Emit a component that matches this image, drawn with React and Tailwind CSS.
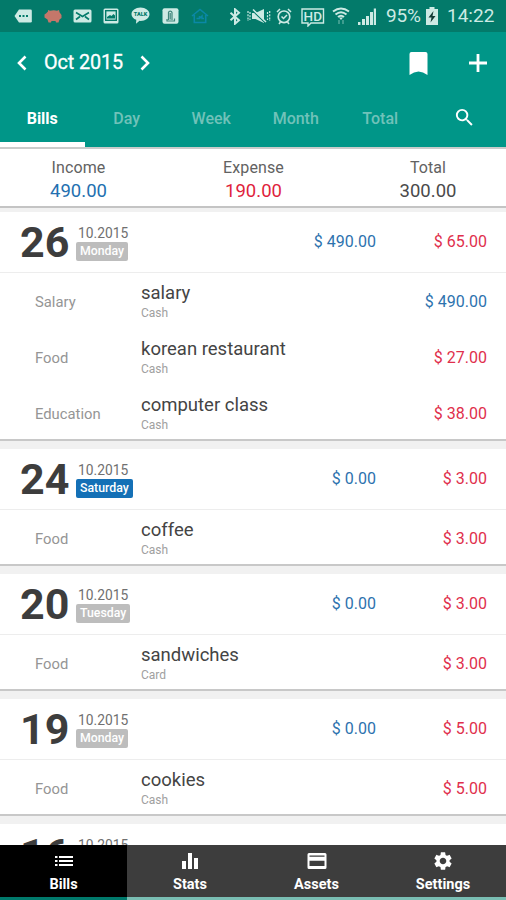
import clsx from "clsx";
import { MdSearch, MdEqualizer, MdSettings } from "react-icons/md";

const tabs = ["Bills", "Day", "Week", "Month", "Total"];

const days = [
  {
    day: "26",
    weekday: "Monday",
    income: "490.00",
    expense: "65.00",
    items: [
      { category: "Salary", title: "salary", account: "Cash", amount: "490.00", income: true },
      { category: "Food", title: "korean restaurant", account: "Cash", amount: "27.00" },
      { category: "Education", title: "computer class", account: "Cash", amount: "38.00" },
    ],
  },
  {
    day: "24",
    weekday: "Saturday",
    income: "0.00",
    expense: "3.00",
    items: [{ category: "Food", title: "coffee", account: "Cash", amount: "3.00" }],
  },
  {
    day: "20",
    weekday: "Tuesday",
    income: "0.00",
    expense: "3.00",
    items: [{ category: "Food", title: "sandwiches", account: "Card", amount: "3.00" }],
  },
  {
    day: "19",
    weekday: "Monday",
    income: "0.00",
    expense: "5.00",
    items: [{ category: "Food", title: "cookies", account: "Cash", amount: "5.00" }],
  },
  { day: "16", items: [] },
];

/*   STATUS BAR   */
function StatusBar() {
  return (
    <div className="flex h-[32px] shrink-0 items-center bg-[#037a6a] pl-[14px] text-[#cdeae4]">
      {/* tag */}
      <svg width="18" height="14" viewBox="0 0 18 14">
        <path d="M5 0.5h11.5a1.3 1.3 0 0 1 1.3 1.3v10.4a1.3 1.3 0 0 1-1.3 1.3H5L0.5 7z" fill="currentColor" />
        <path d="M5 6h2v2H5zM8.500 6h2v2h-2zM12 6h2v2h-2z" fill="#037a6a" />
      </svg>
      {/* piggy bank */}
      <svg className="ml-[12px]" width="18" height="14" viewBox="0 0 18 14">
        <path
          d="M0.500 5.500L2 4.500l2-2V1l2 .8q4-1.300 7 0L15 1l.5 2.300L17.500 6v3l-2 1.500-1 3h-2.500L11.500 12h-4L7 13.500H4.500L3.500 10.500 0.500 8.500z"
          fill="#c4776a"
        />
      </svg>
      {/* mail */}
      <svg className="ml-[11px]" width="19" height="14" viewBox="0 0 19 14">
        <rect x="0.500" y="0.500" width="18" height="13" rx="1.500" fill="currentColor" />
        <path d="M3 3.500l6.500 4 6.500-4M3 10.500l4-3M16 10.500l-4-3" fill="none" stroke="#037a6a" strokeWidth="1.600" />
      </svg>
      {/* picture */}
      <svg className="ml-[11px]" width="16" height="16" viewBox="0 0 16 16">
        <rect x="0.500" y="0.500" width="15" height="15" rx="1.500" fill="currentColor" />
        <rect x="2.700" y="2.700" width="10.600" height="9.600" fill="none" stroke="#037a6a" strokeWidth="1.400" />
        <path d="M4 10.500V9l3-2 1.500 1 2-2L12 7.500v3z" fill="#037a6a" />
      </svg>
      {/* talk bubble */}
      <svg className="ml-[12px]" width="19" height="18" viewBox="0 0 19 18">
        <path
          d="M9.500 0.500c5 0 9 3 9 6.700s-4 6.700-9 6.700l-1-.1-3.500 3 .3-4C2.500 11.800.5 9.700.5 7.200c0-3.700 4-6.700 9-6.700z"
          fill="currentColor"
        />
        <text x="9.500" y="9.400" textAnchor="middle" fontSize="5.500" fontWeight="900" fill="#037a6a">
          TALK
        </text>
      </svg>
      {/* app badge */}
      <svg className="ml-[12px]" width="17" height="16" viewBox="0 0 17 16">
        <rect x="0.500" y="0.300" width="16" height="15.400" rx="2" fill="currentColor" />
        <path d="M6.500 12V4.500a1.800 1.800 0 0 1 3.500 0V12M8.200 5v6.500M5 11v2h7.500v-2.500" fill="none" stroke="#3f857b" strokeWidth="1.200" />
      </svg>
      {/* home */}
      <svg className="ml-[12px]" width="18" height="16" viewBox="0 0 18 16">
        <path d="M1 8l8-6.500L17 8M3.300 7v7.500h11.400V7" fill="none" stroke="#0b88a6" strokeWidth="1.600" />
        <path d="M5.500 10.500h3V8M8.500 10.500L11 8v2.500h2" stroke="#0b88a6" strokeWidth="1.500" fill="none" />
      </svg>
      {/* bluetooth */}
      <svg className="ml-[20px]" width="12" height="17" viewBox="0 0 12 17">
        <path d="M1.500 4.700l8.500 7.500-4 3.500V1.300l4 3.500-8.500 7.500" fill="none" stroke="currentColor" strokeWidth="2" />
      </svg>
      {/* vibrate / muted */}
      <svg className="ml-[6px]" width="24" height="16" viewBox="0 0 24 16">
        <path d="M5 5h3.500L17 1v14l-8.500-4H5z" fill="currentColor" />
        <path d="M5 2l13 12.500" stroke="#037a6a" strokeWidth="1.400" />
        <path d="M6 1.500l13 12.500" stroke="currentColor" strokeWidth="1.500" />
        <path d="M1 3v10M3 4v8M20.500 4v8M22.700 3v10" stroke="currentColor" strokeWidth="1.200" strokeDasharray="2 1.200" />
      </svg>
      {/* alarm */}
      <svg className="ml-[5px]" width="16" height="17" viewBox="0 0 16 17">
        <circle cx="8" cy="8.800" r="5.800" fill="none" stroke="currentColor" strokeWidth="1.700" />
        <path d="M1 4l3-3M15 4l-3-3M3 16l1.500-2M13 16l-1.500-2M5.500 8.500l2 2 3.500-3.500" fill="none" stroke="currentColor" strokeWidth="1.500" />
      </svg>
      {/* HD voice */}
      <svg className="ml-[9px] mt-[2px]" width="24" height="19" viewBox="0 0 24 19">
        <path d="M1 1h21.500v14H10l-3 3v-3H1z" fill="none" stroke="currentColor" strokeWidth="1.400" />
        <text x="11.800" y="12.800" textAnchor="middle" fontSize="13.500" fontWeight="500" fill="currentColor">
          HD
        </text>
      </svg>
      {/* wifi */}
      <svg className="ml-[7px]" width="18" height="18" viewBox="0 0 18 18">
        <path d="M1 4.500q8-6 16 0M3.500 7.500q5.500-4.500 11 0M6 10q3-2.500 6 0" fill="none" stroke="currentColor" strokeWidth="2" />
        <path d="M7 10.500h4L9 13z" fill="currentColor" />
        <path d="M7 13v4M11 13v4" stroke="#5fb0a3" strokeWidth="1.300" />
      </svg>
      {/* signal */}
      <svg className="ml-[8px]" width="18" height="17" viewBox="0 0 18 17">
        <path d="M0 14h2.500v3H0zM4 11h3v6H4zM8 8h3v9H8zM12 4h3v13H12zM15.800 0.500H18v16.500h-2.200z" fill="currentColor" />
      </svg>
      <span className="ml-[10px] mt-[1px] w-[36px] text-[19px] tracking-[-0.2px]">95%</span>
      {/* battery */}
      <svg className="ml-[4px]" width="12" height="18" viewBox="0 0 12 18">
        <path d="M3.500 0h5v2H12v16H0V2h3.500z" fill="currentColor" />
        <path d="M7.500 4L2.500 10.500h3L4.500 15.500l5-6.500h-3z" fill="#123b35" />
      </svg>
      <span className="ml-[9px] mt-[1px] text-[19px]">14:22</span>
    </div>
  );
}

/*   HEADER   */
function Header() {
  return (
    <header className="h-[117px] shrink-0 border-b-2 border-[#c9cccb] bg-[#009688] text-white">
      <div className="flex h-[62px] items-center pl-[17px] pr-[19px]">
        <svg width="10" height="16" viewBox="0 0 10 16">
          <path d="M8.500 1.500L2 8l6.500 6.500" fill="none" stroke="currentColor" strokeWidth="2.600" />
        </svg>
        <span className="ml-[17px] w-[79px] whitespace-nowrap text-[19.800px] tracking-[-0.1px] [-webkit-text-stroke:0.3px]">
          Oct 2015
        </span>
        <svg className="ml-[17px]" width="10" height="16" viewBox="0 0 10 16">
          <path d="M1.500 1.500L8 8l-6.500 6.500" fill="none" stroke="currentColor" strokeWidth="2.600" />
        </svg>
        <svg className="ml-auto" width="19" height="23" viewBox="0 0 19 23">
          <path d="M2.500 0h14A2 2 0 0 1 18.500 2v21q-9-7-18 0V2A2 2 0 0 1 2.500 0z" fill="currentColor" />
        </svg>
        <svg className="ml-[41px]" width="18" height="18" viewBox="0 0 18 18">
          <path d="M0 9h18M9 0v18" stroke="currentColor" strokeWidth="2.800" />
        </svg>
      </div>
      <div className="flex h-[53px]">
        {tabs.map((tab, i) => (
          <div
            key={tab}
            className={clsx(
              "flex h-full w-[84.500px] justify-center border-b-[5px] pt-[12px] text-[16px] leading-[25px]",
              i === 0 ? "border-white font-bold" : "border-transparent font-medium text-[#70c2b9]"
            )}
          >
            {tab}
          </div>
        ))}
        <div className="flex flex-1 justify-center pt-[12px]">
          <MdSearch className="size-[23px]" />
        </div>
      </div>
    </header>
  );
}

function Total({ label, value, className }) {
  return (
    <div className="flex flex-col items-center pt-[7px]">
      <span className="text-[16px] leading-[23px] tracking-[0.1px] text-[#626262]">{label}</span>
      <span className={clsx("text-[18.500px] leading-[24px]", className)}>{value}</span>
    </div>
  );
}

function Summary() {
  return (
    <div className="grid h-[59px] shrink-0 grid-cols-[157px_193px_156px] border-b-2 border-[#c4c4c4] bg-white">
      <Total label="Income" value="490.00" className="text-[#2370b0]" />
      <Total label="Expense" value="190.00" className="text-[#e01f3d]" />
      <Total label="Total" value="300.00" className="text-[#4a4a4a]" />
    </div>
  );
}

function DayCard({ data }) {
  return (
    <section className="mb-[8px] shrink-0 border-b-2 border-[#c8c8c8] bg-white">
      <div className="flex h-[61px] items-center border-b border-[#ededed] pr-[19px]">
        <span className="ml-[20px] w-[50px] text-[43px] font-bold leading-[50px] text-[#3d3d3d]">{data.day}</span>
        <div className="ml-[6px] flex h-[37px] flex-col items-start">
          <span className="ml-[2px] text-[13.800px] leading-[18px] text-[#707070]">10.2015</span>
          {data.weekday && (
            <span
              className={clsx(
                "h-[19px] rounded-[2px] px-[4px] text-[12.300px] font-medium leading-[19px] text-white",
                data.weekday === "Saturday" ? "bg-[#1470b6]" : "bg-[#bdbdbd]"
              )}
            >
              {data.weekday}
            </span>
          )}
        </div>
        {data.income && (
          <>
            <span className="ml-auto text-[16px] text-[#2d72ae]">$ {data.income}</span>
            <span className="w-[111px] text-right text-[16px] text-[#e02f4c]">$ {data.expense}</span>
          </>
        )}
      </div>
      {data.items.map((item) => (
        <div key={item.title} className="flex h-[56px] items-center pr-[19px] pt-[2px] last:h-[54px] last:pt-[4px]">
          <span className="ml-[35px] w-[106px] text-[14.800px] text-[#959595]">{item.category}</span>
          <div className="flex flex-col">
            <span className="text-[18.500px] leading-[22px] text-[#444]">{item.title}</span>
            <span className="text-[12px] leading-[18px] text-[#a0a0a0]">{item.account}</span>
          </div>
          <span className={clsx("ml-auto text-[16px]", item.income ? "text-[#2d72ae]" : "text-[#e02f4c]")}>
            $ {item.amount}
          </span>
        </div>
      ))}
    </section>
  );
}

/*   BOTTOM NAV   */
function ListIcon() {
  return (
    <svg width="18" height="12" viewBox="0 0 18 12">
      <path d="M0 1h2.500v2H0zM4 1h14v2H4zM0 5h2.500v2H0zM4 5h14v2H4zM0 9h2.500v2H0zM4 9h14v2H4z" fill="currentColor" />
    </svg>
  );
}

function CardIcon() {
  return (
    <svg width="20" height="18" viewBox="0 0 20 18">
      <path
        fillRule="evenodd"
        d="M2 1h16a1.500 1.500 0 0 1 1.500 1.500v13A1.500 1.500 0 0 1 18 17H2A1.500 1.500 0 0 1 .5 15.500v-13A1.500 1.500 0 0 1 2 1zM2.500 3.500v1.200h15v-1.200zM2.500 8.800v5.200h15v-5.200z"
        fill="currentColor"
      />
    </svg>
  );
}

const nav = [
  { label: "Bills", icon: <ListIcon /> },
  { label: "Stats", icon: <MdEqualizer className="size-[24px]" /> },
  { label: "Assets", icon: <CardIcon /> },
  { label: "Settings", icon: <MdSettings className="size-[22px]" /> },
];

function BottomNav() {
  return (
    <nav className="grid h-[55px] shrink-0 grid-cols-[127px_126px_127px_126px] text-white">
      {nav.map((item, i) => (
        <div
          key={item.label}
          className={clsx(
            "flex flex-col items-center border-b-[3px] pt-[1px]",
            i === 0 ? "border-[#00796b] bg-black" : "border-[#79bdb2] bg-[#3d3d3d]"
          )}
        >
          <div className="flex h-[30px] items-center">{item.icon}</div>
          <span className="text-[14.500px] font-bold leading-[18px]">{item.label}</span>
        </div>
      ))}
    </nav>
  );
}

export default function App() {
  return (
    <div className="flex h-[900px] w-[506px] flex-col overflow-hidden bg-[#f1f1f1] font-[Roboto,sans-serif]">
      <StatusBar />
      <Header />
      <Summary />
      <main className="flex min-h-0 flex-1 flex-col overflow-hidden pt-[4px]">
        {days.map((d) => (
          <DayCard key={d.day} data={d} />
        ))}
      </main>
      <BottomNav />
    </div>
  );
}
